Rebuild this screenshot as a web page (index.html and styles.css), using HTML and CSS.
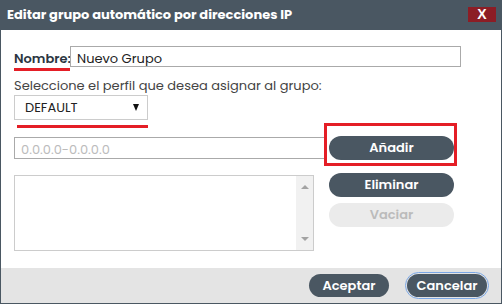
FILE: index.html
```html
<!DOCTYPE html>
<html lang="es">
<head>
    <meta charset="UTF-8">
    <title>Editar grupo automático por direcciones IP</title>
    <link rel="stylesheet" href="styles.css">
</head>
<body>

    <div class="dialog">
        <div class="title-bar">
            <span class="title">Editar grupo automático por direcciones IP</span>
            <span class="close">X</span>
        </div>

        <div class="content">
            <div class="name-row">
                <label class="name-label">Nombre:</label>
                <div class="name-input">Nuevo Grupo</div>
            </div>

            <p class="hint">Seleccione el perfil que desea asignar al grupo:</p>
            <div class="select">
                <span>DEFAULT</span>
                <span class="caret"></span>
            </div>
            <div class="mark"></div>

            <div class="grid">
                <div class="ip-input">0.0.0.0-0.0.0.0</div>
                <button class="btn btn-add">Añadir</button>

                <div class="list">
                    <div class="scroll">
                        <span class="arrow up"></span>
                        <span class="arrow down"></span>
                    </div>
                </div>
                <div class="side">
                    <button class="btn">Eliminar</button>
                    <button class="btn btn-off">Vaciar</button>
                </div>
            </div>
        </div>

        <div class="footer">
            <button class="btn btn-foot">Aceptar</button>
            <button class="btn btn-foot focused">Cancelar</button>
        </div>
    </div>

</body>
</html>
```

FILE: styles.css
```css
* { margin: 0; padding: 0; box-sizing: border-box; font-family: "Poppins", Inter, "Noto Sans", sans-serif; }
body { background: #fff; }

.dialog {
    width: 502px;
    height: 304px;
    display: flex;
    flex-direction: column;
    background: #4a5762;
    padding: 0 1px 1px;
}
.title-bar {
    height: 30px;
    display: flex;
    align-items: center;
    justify-content: space-between;
    padding: 0 5px 0 6px;
}
.title {
    color: #fff;
    font-size: 13px;
    font-weight: bold;
}
.close {
    width: 28px;
    height: 15px;
    margin-top: -1px;
    background: #8c1d25;
    color: #fff;
    font-family: "Liberation Sans", sans-serif;
    font-size: 14px;
    font-weight: bold;
    text-align: center;
    line-height: 15px;
}

.content {
    flex: 1;
    background: #fff;
    padding: 16px 13px 0;
    color: #333;
    font-size: 13px;
}
.name-row { display: flex; align-items: flex-start; }
.name-label {
    width: 56px;
    height: 25px;
    padding-top: 3px;
    font-weight: 600;
    color: #2b3541;
    border-bottom: 3px solid #e41e26;
}
.name-input {
    width: 391px;
    height: 21px;
    border: 1px solid #aaa;
    padding: 2px 6px;
    color: #222;
}
.hint { margin-top: 6px; line-height: 17px; color: #444; }
.select {
    width: 134px;
    height: 25px;
    margin-top: 1px;
    border: 1px solid #ccc;
    display: flex;
    justify-content: space-between;
    align-items: center;
    padding: 0 8px 0 10px;
    color: #222;
}
.caret {
    border-left: 3.5px solid transparent;
    border-right: 3.5px solid transparent;
    border-top: 7px solid #111;
}
.mark {
    width: 131px;
    height: 3px;
    margin: 5px 0 0 3px;
    background: #e41e26;
}

.grid {
    display: grid;
    grid-template-columns: 312px 125px;
    column-gap: 3px;
    row-gap: 14px;
    margin-top: 8px;
}
.ip-input {
    height: 22px;
    margin-top: 1px;
    border: 1px solid #aaa;
    padding: 2px 6px;
    color: #bbb;
}
.btn {
    height: 24px;
    border: none;
    border-radius: 12px;
    background: #4a5762;
    color: #fff;
    font-size: 13px;
    font-weight: 600;
}
.btn-add { position: relative; }
.btn-add::after {
    content: "";
    position: absolute;
    top: -13px;
    left: -5px;
    right: -3px;
    bottom: -6px;
    border: 3px solid #e41e26;
}
.btn-off { background: #ebebeb; color: #bbb; }

.list {
    width: 300px;
    height: 76px;
    margin-top: 1px;
    border: 1px solid #ccc;
    display: flex;
    justify-content: flex-end;
}
.scroll {
    width: 17px;
    background: #f1f1f1;
    position: relative;
}
.arrow {
    position: absolute;
    left: 5px;
    border-left: 4px solid transparent;
    border-right: 4px solid transparent;
}
.arrow.up { top: 9px; border-bottom: 4px solid #a3a3a3; }
.arrow.down { bottom: 9px; border-top: 4px solid #a3a3a3; }
.side { display: flex; flex-direction: column; gap: 6px; margin-top: -1px; }

.footer {
    height: 35px;
    background: #e4e4e4;
    display: flex;
    justify-content: flex-end;
    align-items: center;
    gap: 18px;
    padding-right: 14px;
}
.btn-foot { width: 80px; height: 23px; }
.focused { outline: 1px solid #7aa7e6; outline-offset: 1px; }
```
